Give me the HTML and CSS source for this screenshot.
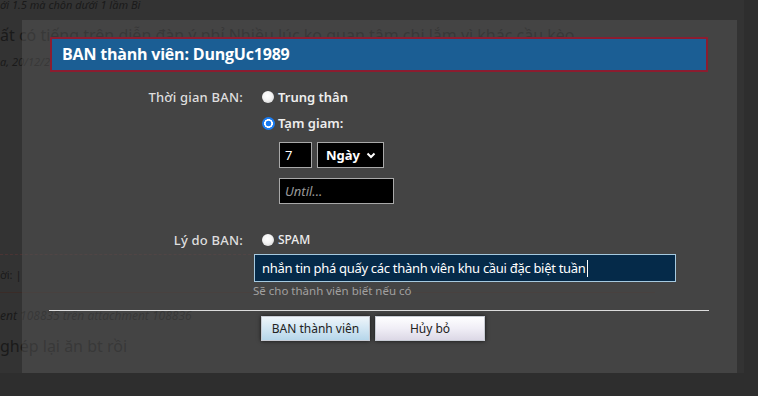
FILE: index.html
```html
<!DOCTYPE html>
<html lang="vi">
<head>
<meta charset="utf-8">
<link rel="stylesheet" href="styles.css">
</head>
<body>
<div class="page">
  <div class="bg-line bg-small bg-first">ới 1.5 mà chôn dưới 1 lầm Bi</div>
  <div class="bg-line bg-big bg-second">ất có tiếng trên diễn đàn ý nhỉ Nhiều lúc ko quan tâm chị lắm vì khác cầu kèo</div>
  <div class="bg-line bg-small bg-third">a, 20/12/2018</div>
  <div class="bg-dash"></div>
  <div class="bg-line bg-small bg-reply">ời: |</div>
  <div class="bg-rule"></div>
  <div class="bg-line bg-small bg-attach">ent 108835 trên attachment 108836</div>
  <div class="bg-line bg-big bg-last">ghép lại ăn bt rồi</div>
</div>

<div class="dialog">
  <div class="title">BAN thành viên: DungUc1989</div>
  <form class="form">
    <div class="row row-first">
      <div class="label">Thời gian BAN:</div>
      <label class="opt"><span class="radio"></span>Trung thân</label>
    </div>
    <div class="row row-second">
      <div class="label"></div>
      <label class="opt"><span class="radio checked"></span>Tạm giam:</label>
    </div>
    <div class="row row-inputs">
      <div class="label"></div>
      <div class="ctrls">
        <div class="box num">7</div>
        <div class="box sel"><span>Ngày</span>
          <svg width="10" height="7" viewBox="0 0 10 7"><path d="M1.5 1.5 L5 5 L8.5 1.5" fill="none" stroke="#fff" stroke-width="2"/></svg>
        </div>
      </div>
    </div>
    <div class="row row-until">
      <div class="label"></div>
      <div class="ctrls">
        <div class="box until">Until...</div>
      </div>
    </div>
    <div class="row row-reason">
      <div class="label">Lý do BAN:</div>
      <label class="opt opt-spam"><span class="radio"></span>SPAM</label>
    </div>
    <div class="row row-text">
      <div class="label"></div>
      <div class="reason">nhắn tin phá quấy các thành viên khu cầui đặc biệt tuần<span class="caret"></span></div>
    </div>
    <div class="row row-hint">
      <div class="label"></div>
      <div class="hint">Sẽ cho thành viên biết nếu có</div>
    </div>
    <div class="sep"></div>
    <div class="row row-buttons">
      <div class="label"></div>
      <div class="buttons">
        <button type="button" class="btn btn-primary">BAN thành viên</button>
        <button type="button" class="btn btn-cancel">Hủy bỏ</button>
      </div>
    </div>
  </form>
</div>
</body>
</html>
```

FILE: styles.css
```css
html, body {
  margin: 0;
  padding: 0;
  height: 100%;
}
body {
  background: #2e2e2e;
  font-family: "Noto Sans", "Open Sans", sans-serif;
  overflow: hidden;
}
.page {
  width: 744px;
  height: 373px;
  background: #333333;
  color: #1a1a1a;
  overflow: hidden;
}
.bg-line {
  white-space: nowrap;
}
.bg-small {
  font-size: 11px;
  font-style: italic;
  line-height: 14px;
}
.bg-big {
  font-size: 16px;
  line-height: 22px;
}
.bg-first { margin-top: -2px; }
.bg-second { margin-top: 12px; }
.bg-third { margin-top: 9px; }
.bg-dash {
  margin-top: 185px;
  width: 256px;
  border-top: 1px dashed #4a3434;
}
.bg-reply { margin-top: 13px; font-style: normal; }
.bg-rule {
  margin-top: 10px;
  width: 655px;
  border-top: 1px solid #3a2c28;
}
.bg-attach { margin-top: 16px; font-size: 12px; }
.bg-last { margin-top: 12px; }

.dialog {
  position: absolute;
  left: 22px;
  top: 20px;
  width: 715px;
  height: 353px;
  box-sizing: border-box;
  padding-top: 17px;
  background: rgba(86, 86, 86, 0.5);
}
.title {
  margin: 0 29px 0 28px;
  height: 35px;
  box-sizing: border-box;
  border: 2px solid #8b1d30;
  background: #1b5e94;
  color: #ffffff;
  font-size: 16px;
  font-weight: 700;
  line-height: 30px;
  padding-left: 10px;
  font-family: "Open Sans", "Noto Sans", sans-serif;
  letter-spacing: -0.2px;
}
.form {
  margin: 0;
  color: #e6e6e6;
  font-size: 13px;
}
.row {
  display: grid;
  grid-template-columns: 221px 1fr;
  column-gap: 19px;
  align-items: center;
}
.label {
  text-align: right;
  color: #dedede;
  line-height: 20px;
  font-weight: 500;
  letter-spacing: 0.2px;
}
.opt {
  display: flex;
  align-items: center;
  line-height: 20px;
  font-weight: 600;
  color: #eeeeee;
}
.radio {
  width: 12px;
  height: 12px;
  border-radius: 50%;
  box-sizing: border-box;
  margin-right: 4px;
  background: radial-gradient(circle at 45% 40%, #ffffff 0%, #f4f4f4 45%, #c9c9c9 100%);
}
.radio.checked {
  width: 13px;
  height: 13px;
  margin-right: 3px;
  background: radial-gradient(circle, #1a7cf2 0 2.6px, #ffffff 3.1px 4.2px, #1a7cf2 4.6px 100%);
}
.opt-spam {
  font-size: 12px;
  font-weight: 500;
}
.row-first { margin-top: 15px; }
.row-second { margin-top: 6px; }
.row-inputs { margin-top: 9px; }
.row-until { margin-top: 10px; }
.row-reason { margin-top: 26px; }
.row-text { margin-top: 4px; }
.row-hint { margin-top: 2px; }
.ctrls {
  display: flex;
  gap: 5px;
  margin-left: 17px;
}
.box {
  height: 26px;
  box-sizing: border-box;
  background: #000000;
  border: 1px solid #a9a9a9;
  color: #ffffff;
  line-height: 24px;
  font-size: 13px;
}
.num {
  width: 33px;
  padding-left: 5px;
}
.sel {
  width: 67px;
  display: flex;
  align-items: center;
  justify-content: space-between;
  padding: 0 7px 0 8px;
  font-weight: 700;
}
.until {
  width: 115px;
  padding-left: 5px;
  color: #9a9a9a;
  font-style: italic;
}
.reason {
  margin-left: -8px;
  width: 422px;
  height: 28px;
  box-sizing: border-box;
  background: #052a49;
  border: 1px solid #a6cae0;
  color: #ffffff;
  font-size: 13px;
  letter-spacing: -0.3px;
  line-height: 26px;
  padding-left: 7px;
  white-space: nowrap;
  display: flex;
  align-items: center;
}
.caret {
  display: inline-block;
  width: 1px;
  height: 17px;
  background: #ffffff;
  margin-left: 1px;
}
.hint {
  margin-left: -9px;
  font-size: 11.5px;
  color: #a0a0a0;
  line-height: 14px;
}
.sep {
  margin: 12px 28px 0 27px;
  border-top: 1px solid #dcdcdc;
}
.row-buttons { margin-top: 5px; }
.buttons {
  display: flex;
  gap: 5px;
  margin-left: -1px;
}
.btn {
  height: 25px;
  box-sizing: border-box;
  font-family: "Noto Sans", "Open Sans", sans-serif;
  font-size: 12px;
  color: #222222;
  border: 1px solid #c8ccd4;
  padding: 0;
  box-shadow: 0 0 4px rgba(0, 0, 0, 0.7);
  cursor: pointer;
}
.btn-primary {
  width: 109px;
  background: linear-gradient(#eef5fa, #d2e6f3 50%, #b6d6ea);
}
.btn-cancel {
  width: 110px;
  background: linear-gradient(#fefeff, #f0eef6 50%, #dcd8e6);
}
```
